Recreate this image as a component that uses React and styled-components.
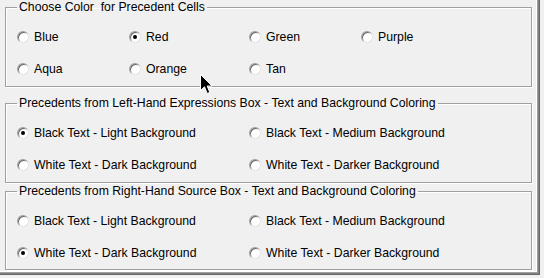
import React from "react";
import styled, { createGlobalStyle } from "styled-components";

const GlobalStyle = createGlobalStyle`
  html, body {
    margin: 0;
    padding: 0;
    background: #f0f0f0;
  }
  body {
    font-family: "Liberation Sans", Arial, sans-serif;
    font-size: 12.25px;
    color: #000;
  }
`;

const Frame = styled.div`
  position: relative;
  width: 540px;
  height: 275px;
  box-sizing: border-box;
  padding-left: 5px;
  box-shadow: inset -1px -1px 0 #696969, inset -2px -2px 0 #808080,
    inset -3px -3px 0 #a0a0a0, inset -4px -4px 0 #fff;
`;

const Group = styled.fieldset`
  width: 527px;
  box-sizing: border-box;
  margin: ${(p) => p.$top}px 0 0 0;
  padding: 7px 0 ${(p) => p.$bottom}px 11px;
  border: 1px solid #a0a0a0;
  box-shadow: inset 1px 1px 0 #fff, 1px 1px 0 #fff;
  min-width: 0;
`;

const Legend = styled.legend`
  padding: 0 2px;
  line-height: 14px;
  white-space: pre;
`;

const Options = styled.div`
  display: grid;
  grid-template-columns: ${(p) => p.$cols};
  grid-auto-rows: 32px;
`;

const Option = styled.label`
  display: flex;
  align-items: center;
  gap: 5px;
  white-space: nowrap;
`;

const Radio = styled.span`
  position: relative;
  flex: none;
  width: 12px;
  height: 12px;
  box-sizing: border-box;
  border-radius: 50%;
  background: #fff;
  border: 1px solid;
  border-color: #a0a0a0 #e3e3e3 #e3e3e3 #a0a0a0;
  box-shadow: inset 1px 1px 0 #696969;

  &::after {
    content: "";
    display: ${(p) => (p.$checked ? "block" : "none")};
    position: absolute;
    left: 3px;
    top: 3px;
    width: 4px;
    height: 4px;
    border-radius: 50%;
    background: #000;
  }
`;

const Cursor = styled.svg`
  position: absolute;
  left: 200px;
  top: 74px;
  pointer-events: none;
`;

const groups = [
  {
    title: "Choose Color  for Precedent Cells",
    top: 0,
    bottom: 1,
    cols: "112px 120px 112px 1fr",
    items: ["Blue", "Red", "Green", "Purple", "Aqua", "Orange", "Tan"],
    checked: "Red",
  },
  {
    title:
      "Precedents from Left-Hand Expressions Box - Text and Background Coloring",
    top: 9,
    bottom: 1,
    cols: "232px 1fr",
    items: [
      "Black Text - Light Background",
      "Black Text - Medium Background",
      "White Text - Dark Background",
      "White Text - Darker Background",
    ],
    checked: "Black Text - Light Background",
  },
  {
    title:
      "Precedents from Right-Hand Source Box - Text and Background Coloring",
    top: 1,
    bottom: 0,
    cols: "232px 1fr",
    items: [
      "Black Text - Light Background",
      "Black Text - Medium Background",
      "White Text - Dark Background",
      "White Text - Darker Background",
    ],
    checked: "White Text - Dark Background",
  },
];

const App = () => {
  return (
    <Frame>
      <GlobalStyle />
      {groups.map((g) => (
        <Group key={g.title} $top={g.top} $bottom={g.bottom}>
          <Legend>{g.title}</Legend>
          <Options $cols={g.cols}>
            {g.items.map((item) => (
              <Option key={item}>
                <Radio $checked={item === g.checked} />
                {item}
              </Option>
            ))}
          </Options>
        </Group>
      ))}
      <Cursor width="14" height="22" viewBox="0 0 14 22">
        <path
          d="M0.5 0.5 L0.5 16.5 L4.5 12.8 L7.2 19.5 L9.8 18.4 L7.2 12 L12 12 Z"
          fill="#000"
          stroke="#fff"
          strokeWidth="1"
        />
      </Cursor>
    </Frame>
  );
};

export default App;
